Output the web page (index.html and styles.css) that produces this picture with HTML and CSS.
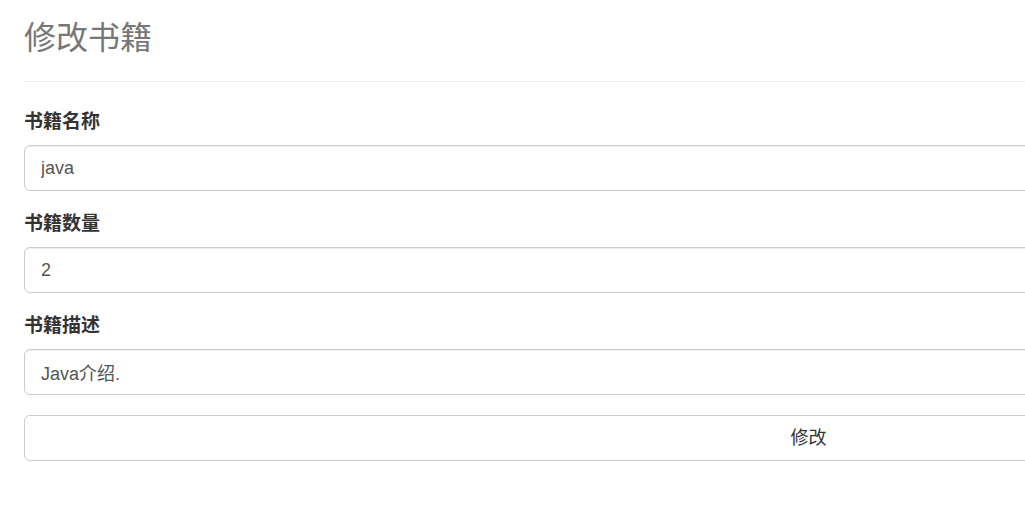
FILE: index.html
```html
<!DOCTYPE html>
<html lang="zh-CN">
<head>
<meta charset="utf-8">
<title>修改书籍</title>
<link rel="stylesheet" href="styles.css">
</head>
<body>
<div class="page">
  <div class="page-header">
    <h1>修改书籍</h1>
  </div>
  <form class="book-form">
    <div class="form-group">
      <label class="form-label">书籍名称</label>
      <input class="form-control" type="text" value="java">
    </div>
    <div class="form-group">
      <label class="form-label">书籍数量</label>
      <input class="form-control" type="text" value="2">
    </div>
    <div class="form-group">
      <label class="form-label">书籍描述</label>
      <input class="form-control" type="text" value="Java介绍.">
    </div>
    <button class="btn" type="button">修改</button>
  </form>
</div>
</body>
</html>
```

FILE: styles.css
```css
html, body {
  margin: 0;
  padding: 0;
  overflow: hidden;
  background: #fff;
}
body {
  font-family: "Liberation Sans", "Noto Sans CJK SC", sans-serif;
  color: #333;
}
.page {
  width: 1569px;
  padding-left: 24px;
}
.page-header {
  border-bottom: 1px solid #eee;
  padding-top: 18px;
  padding-bottom: 23px;
  margin-bottom: 27px;
}
.page-header h1 {
  margin: 0;
  font-size: 32px;
  line-height: 40px;
  font-weight: 400;
  color: #777;
}
.form-group {
  margin-bottom: 20px;
}
.form-label {
  display: block;
  font-size: 19px;
  line-height: 26px;
  font-weight: 700;
  color: #333;
  margin-bottom: 10px;
}
.form-control {
  display: block;
  box-sizing: border-box;
  width: 100%;
  height: 46px;
  padding: 10px 16px;
  font-family: inherit;
  font-size: 18px;
  line-height: 24px;
  color: #555;
  background: #fff;
  border: 1px solid #ccc;
  border-radius: 6px;
  box-shadow: inset 0 1px 1px rgba(0,0,0,.075);
  outline: none;
}
.btn {
  display: block;
  box-sizing: border-box;
  width: 100%;
  height: 46px;
  padding: 10px 16px;
  font-family: inherit;
  font-size: 18px;
  line-height: 24px;
  color: #333;
  background: #fff;
  border: 1px solid #ccc;
  border-radius: 6px;
  cursor: pointer;
}
```
